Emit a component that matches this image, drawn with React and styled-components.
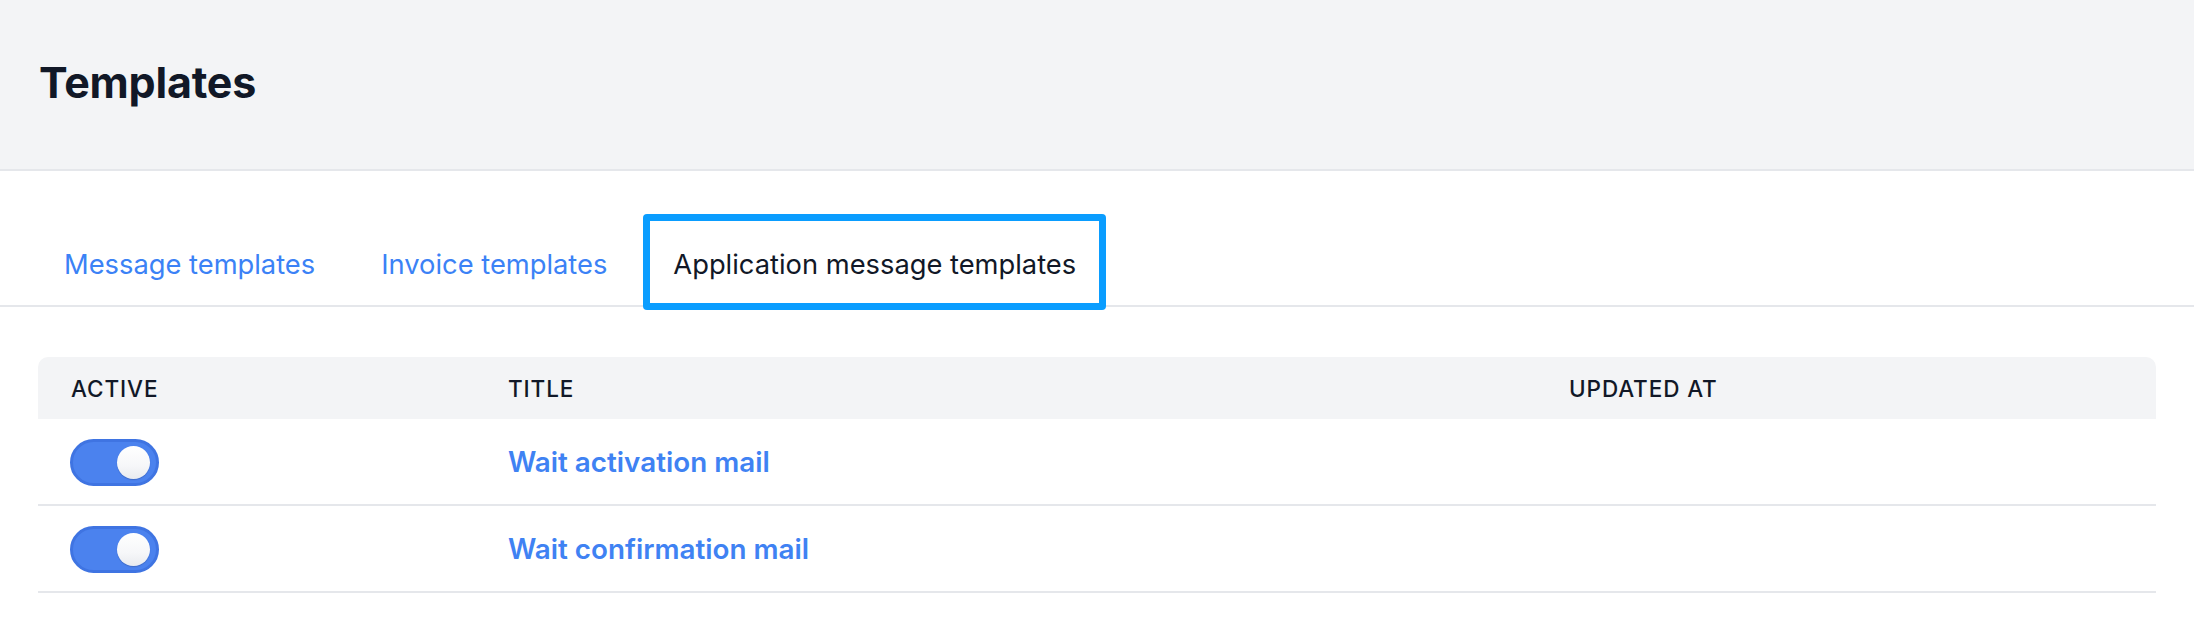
import React, { useState } from "react";
import styled, { createGlobalStyle } from "styled-components";

const GlobalStyle = createGlobalStyle`
  body {
    margin: 0;
    background: #ffffff;
    font-family: Inter, "Noto Sans", "Liberation Sans", sans-serif;
    color: #111827;
  }
`;

const Page = styled.div`
  width: 100%;
`;

const Header = styled.header`
  box-sizing: border-box;
  height: 171px;
  padding: 0 39px 6px;
  display: flex;
  align-items: center;
  background-color: #f3f4f6;
  border-bottom: 2px solid #e5e7eb;
`;

const Title = styled.h1`
  margin: 0;
  font-size: 43px;
  font-weight: 700;
  letter-spacing: -0.2px;
  color: #111827;
`;

const TabList = styled.nav`
  margin-top: 43px;
  padding-left: 34px;
  display: flex;
  gap: 6px;
  border-bottom: 2px solid #e5e7eb;
`;

const Tab = styled.button`
  box-sizing: border-box;
  height: 96px;
  margin-bottom: -5px;
  padding: 4px 30px 0;
  border: none;
  border-radius: 4px;
  background: ${(p) => (p.$active ? "#ffffff" : "transparent")};
  font-family: inherit;
  font-size: 27.3px;
  font-weight: 400;
  color: ${(p) => (p.$active ? "#111827" : "#3b82f6")};
  box-shadow: ${(p) => (p.$active ? "inset 0 0 0 7px #0a9dff" : "none")};
  cursor: pointer;
`;

const Table = styled.div`
  margin: 50px 38px 0;
`;

const Row = styled.div`
  display: grid;
  grid-template-columns: 437px 1061px 1fr;
  align-items: center;
  height: ${(p) => (p.$head ? "62px" : "85px")};
  background: ${(p) => (p.$head ? "#f3f4f6" : "#ffffff")};
  border-radius: ${(p) => (p.$head ? "10px 10px 0 0" : "0")};
  border-bottom: ${(p) => (p.$head ? "none" : "2px solid #e5e7eb")};
`;

const HeadCell = styled.div`
  padding: 0 33px;
  font-size: 22.5px;
  font-weight: 500;
  letter-spacing: 0.9px;
  text-transform: uppercase;
  color: #111827;
`;

const Cell = styled.div`
  padding: 0 ${(p) => (p.$first ? "32px" : "33px")};
  display: flex;
  align-items: center;
`;

const Track = styled.button`
  box-sizing: border-box;
  width: 89px;
  height: 47px;
  margin-top: 2px;
  padding: 0 6px;
  display: flex;
  align-items: center;
  justify-content: ${(p) => (p.$on ? "flex-end" : "flex-start")};
  border: 3px solid ${(p) => (p.$on ? "#3f74e2" : "#d1d5db")};
  border-radius: 999px;
  background: ${(p) => (p.$on ? "#4b82ee" : "#e5e7eb")};
  cursor: pointer;
`;

const Knob = styled.span`
  width: 33px;
  height: 33px;
  border-radius: 50%;
  background: linear-gradient(180deg, #ffffff 0%, #f6f7f9 60%, #e9ebef 100%);
  box-shadow: 0 1px 1px rgba(30, 41, 80, 0.25);
`;

const TitleLink = styled.a`
  font-size: 27.8px;
  font-weight: 600;
  color: #3f82f3;
  text-decoration: none;
  cursor: pointer;
`;

const TABS = ["Message templates", "Invoice templates", "Application message templates"];

const TEMPLATES = [
  { id: 1, title: "Wait activation mail", active: true, updatedAt: "" },
  { id: 2, title: "Wait confirmation mail", active: true, updatedAt: "" },
];

export default function App() {
  const [tab, setTab] = useState(2);
  const [rows, setRows] = useState(TEMPLATES);

  const toggle = (id) =>
    setRows(rows.map((r) => (r.id === id ? { ...r, active: !r.active } : r)));

  return (
    <Page>
      <GlobalStyle />
      <Header>
        <Title>Templates</Title>
      </Header>
      <TabList>
        {TABS.map((label, i) => (
          <Tab key={label} $active={tab === i} onClick={() => setTab(i)}>
            {label}
          </Tab>
        ))}
      </TabList>
      <Table>
        <Row $head>
          <HeadCell>Active</HeadCell>
          <HeadCell>Title</HeadCell>
          <HeadCell>Updated at</HeadCell>
        </Row>
        {rows.map((r) => (
          <Row key={r.id}>
            <Cell $first>
              <Track $on={r.active} onClick={() => toggle(r.id)}>
                <Knob />
              </Track>
            </Cell>
            <Cell>
              <TitleLink>{r.title}</TitleLink>
            </Cell>
            <Cell>{r.updatedAt}</Cell>
          </Row>
        ))}
      </Table>
    </Page>
  );
}
